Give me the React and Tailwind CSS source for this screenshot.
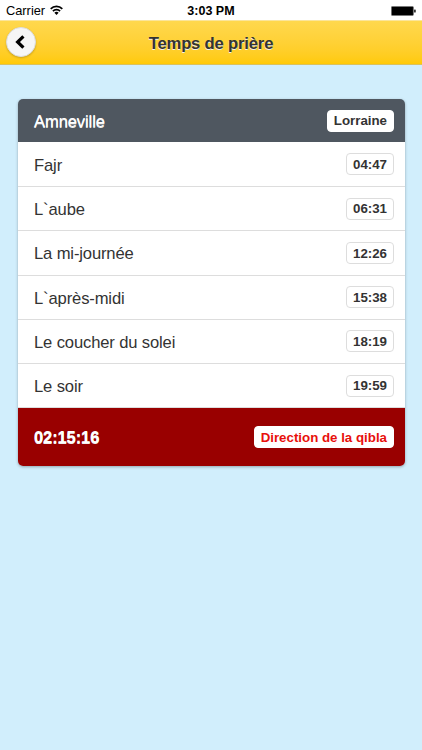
const times = [
  { name: 'Fajr', time: '04:47' },
  { name: 'L`aube', time: '06:31' },
  { name: 'La mi-journée', time: '12:26' },
  { name: 'L`après-midi', time: '15:38' },
  { name: 'Le coucher du solei', time: '18:19' },
  { name: 'Le soir', time: '19:59' },
];

function StatusBar() {
  return (
    <div className="grid h-5 grid-cols-3 items-center bg-white pt-0.5 pr-[6px] pl-[6px] text-black">
      <div className="flex items-center gap-[5px]">
        <span className="pt-px text-[12.8px] leading-none">Carrier</span>
        <svg className="-mt-px" width="13" height="10" viewBox="0 0 13 10" fill="none" stroke="#000" strokeWidth="1.7">
          <path d="M0.7 3.9a8 8 0 0 1 11.6 0" />
          <path d="M2.9 6.2a5 5 0 0 1 7.2 0" />
          <path d="M6.5 9.9L4.4 7.8a3 3 0 0 1 4.2 0z" fill="#000" stroke="none" />
        </svg>
      </div>
      <span className="pt-px text-center text-[12.5px] leading-none font-bold">3:03 PM</span>
      <svg className="justify-self-end" width="25" height="10" viewBox="0 0 25 10">
        <rect x="0.4" y="0.4" width="22" height="9.2" rx="1" fill="#000" stroke="#777" strokeWidth="0.8" />
        <rect x="23" y="3.5" width="1.8" height="3" rx="0.6" fill="#333" />
      </svg>
    </div>
  );
}

function Header() {
  return (
    <header className="grid h-[45px] grid-cols-[30px_1fr_30px] items-center border-y border-t-[#fbe59a] border-b-[#d9c15f] bg-linear-to-b from-[#ffd84d] to-[#ffca05] px-[6px]">
      <button className="-mt-[2px] flex h-[30px] w-[30px] items-center justify-center rounded-full border border-[#ddd] bg-[#f6f6f6] pr-[2px] shadow-[0_1px_2px_rgba(0,0,0,0.2)]">
        <svg width="10" height="14" viewBox="0 0 10 14" fill="none" stroke="#000" strokeWidth="3.2">
          <path d="M8.4 1.3L2.6 7l5.8 5.7" />
        </svg>
      </button>
      <h1 className="pt-[3px] text-center text-[16.6px] leading-[20px] font-bold tracking-[-0.17px] text-[#333] [text-shadow:0_1px_0_#eee]">Temps de prière</h1>
    </header>
  );
}

function Bubble({ children, className }) {
  return (
    <span className={`flex h-[22px] items-center rounded-[4px] border bg-white px-[6px] pt-px text-[13.3px] leading-none font-bold ${className}`}>
      {children}
    </span>
  );
}

export default function App() {
  return (
    <div className="h-[750px] w-[422px] overflow-hidden bg-[#d1eefc] font-['Liberation_Sans',Arial,sans-serif]">
      <StatusBar />
      <Header />
      <main className="px-[17.5px] pt-[34px]">
        <ul className="overflow-hidden rounded-[5px] shadow-[0_1px_3px_rgba(0,0,0,0.3)]">
          <li className="flex h-[43px] items-center justify-between bg-[#4f5760] pr-[10.5px] pl-[16.5px] text-white">
            <span className="pt-[3px] text-[16.6px] leading-[20px] tracking-[-0.12px] [text-shadow:0_1px_0_#eee]">Amneville</span>
            <Bubble className="border-white text-[#333]">Lorraine</Bubble>
          </li>
          {times.map(({ name, time }) => (
            <li key={name} className="flex h-[44.25px] items-center justify-between border-b border-[#ddd] bg-white pr-[10.5px] pl-[16.5px] text-[#333] nth-2:h-[45px]">
              <span className="pt-[3px] text-[16.6px] leading-[20px] tracking-[-0.14px]">{name}</span>
              <Bubble className="border-[#ddd]">{time}</Bubble>
            </li>
          ))}
          <li className="flex h-[58px] items-center justify-between bg-[#990000] pr-[10.5px] pl-[16.5px] text-white">
            <span className="pt-[2px] text-[16.6px] leading-[20px] font-bold tracking-[-0.15px] [text-shadow:0_1px_0_#eee]">02:15:16</span>
            <Bubble className="border-white text-[#e8100c]">Direction de la qibla</Bubble>
          </li>
        </ul>
      </main>
    </div>
  );
}
